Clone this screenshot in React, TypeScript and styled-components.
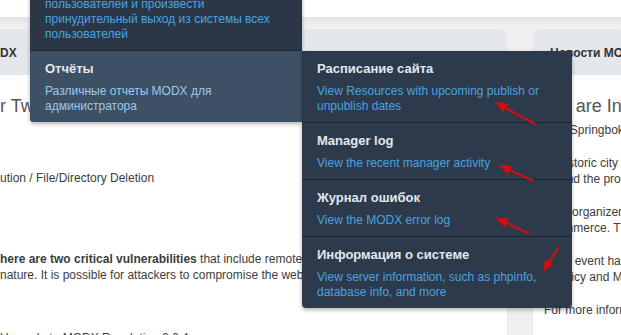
import React from "react";
import styled, { createGlobalStyle } from "styled-components";

const GlobalStyle = createGlobalStyle`
  html, body { margin: 0; padding: 0; }
  body {
    font-family: "Liberation Sans", Arial, sans-serif;
    background: #f0f0f0;
  }
`;

const Page = styled.div`
  position: relative;
  width: 621px;
  height: 335px;
  overflow: hidden;
  background: #f0f0f0;
`;

const TopBar = styled.header`
  height: 17px;
  background: #ffffff;
`;

const Dashboard = styled.main`
  display: flex;
  align-items: stretch;
  gap: 26px;
  height: 318px;
  box-sizing: border-box;
  padding-top: 13px;
  background: linear-gradient(to bottom, #e3e3e3 0, #eeeeee 7px, #f0f0f0 13px);
`;

const Widget = styled.section<{ $width: number; $cutLeft?: boolean }>`
  flex: 0 0 ${(p) => p.$width}px;
  display: flex;
  flex-direction: column;
  background: #ffffff;
  border-radius: ${(p) => (p.$cutLeft ? "0 5px 0 0" : "5px 5px 0 0")};
  box-shadow: 0 0 2px rgba(0, 0, 0, 0.1);
  overflow: hidden;
`;

const WidgetHeader = styled.h3<{ $pad: number }>`
  flex: 0 0 45px;
  display: flex;
  align-items: center;
  height: 45px;
  margin: 0;
  padding-left: ${(p) => p.$pad}px;
  background: #e4e8ec;
  color: #333333;
  font-size: 12px;
  font-weight: bold;
  white-space: nowrap;
`;

const WidgetBody = styled.div<{ $pad: number }>`
  flex: 0 0 auto;
  display: flex;
  flex-direction: column;
  padding: 20px 0 0 ${(p) => p.$pad}px;
`;

const Heading = styled.h2`
  flex: 0 0 auto;
  margin: 0 0 5px;
  font-size: 18px;
  line-height: 22px;
  font-weight: normal;
  color: #555555;
  white-space: nowrap;
`;

const Para = styled.p<{ $mt?: number }>`
  flex: 0 0 auto;
  margin: ${(p) => p.$mt ?? 0}px 0 17px;
  font-size: 12px;
  line-height: 16px;
  color: #3c3c3c;
  white-space: nowrap;
`;

const Menu = styled.nav`
  position: absolute;
  left: 30px;
  top: -51px;
  width: 272px;
  background: #2b3747;
  border-radius: 0 0 0 4px;
  box-shadow: 0 2px 4px rgba(0, 0, 0, 0.3);
`;

const MenuItem = styled.div<{ $active?: boolean; $last?: boolean }>`
  position: relative;
  padding: 9px 15px 8px;
  background: ${(p) => (p.$active ? "#3d5064" : "transparent")};
  border-bottom: ${(p) => (p.$last ? "none" : "1px solid #1d2733")};
  border-radius: ${(p) => (p.$last ? "0 0 0 4px" : "0")};
`;

const SubMenu = styled.div`
  position: absolute;
  left: 100%;
  top: 0;
  width: 270px;
  background: #2c3a4b;
  border-radius: 0 0 4px 4px;
  box-shadow: 0 2px 4px rgba(0, 0, 0, 0.3);
`;

const SubItem = styled.div<{ $last?: boolean }>`
  padding: 9px 15px 8px;
  border-bottom: ${(p) => (p.$last ? "none" : "1px solid #1d2733")};
`;

const ItemTitle = styled.div`
  margin-bottom: 6px;
  font-size: 13px;
  line-height: 18px;
  font-weight: bold;
  color: #e2e8ee;
`;

const ItemDesc = styled.div<{ $muted?: boolean }>`
  font-size: 12px;
  line-height: 15px;
  color: ${(p) => (p.$muted ? "#9fc9ee" : "#4aa3e0")};
`;

const Annotations = styled.svg`
  position: absolute;
  left: 0;
  top: 0;
  pointer-events: none;
`;

type Pt = [number, number];

function Arrow({ tail, tip }: { tail: Pt; tip: Pt }) {
  const dx = tip[0] - tail[0];
  const dy = tip[1] - tail[1];
  const len = Math.hypot(dx, dy);
  const ux = dx / len;
  const uy = dy / len;
  const hl = 12;
  const hw = 5;
  const bx = tip[0] - ux * hl;
  const by = tip[1] - uy * hl;
  const nx = -uy;
  const ny = ux;
  const pts = `${tip[0]},${tip[1]} ${bx + nx * hw},${by + ny * hw} ${bx - nx * hw},${by - ny * hw}`;
  return (
    <g>
      <line x1={tail[0]} y1={tail[1]} x2={bx} y2={by} stroke="#d10f0f" strokeWidth={2.2} strokeLinecap="round" />
      <polygon points={pts} fill="#d10f0f" />
    </g>
  );
}

const subItems = [
  { title: "Расписание сайта", desc: "View Resources with upcoming publish or unpublish dates" },
  { title: "Manager log", desc: "View the recent manager activity" },
  { title: "Журнал ошибок", desc: "View the MODX error log" },
  { title: "Информация о системе", desc: "View server information, such as phpinfo, database info, and more" },
];

export default function App() {
  return (
    <Page>
      <GlobalStyle />
      <TopBar />
      <Dashboard>
        <Widget $width={507} $cutLeft>
          <WidgetHeader $pad={0}>DX</WidgetHeader>
          <WidgetBody $pad={0}>
            <Heading>r Two Critical Vulnerabilities</Heading>
            <Para $mt={48}>ution / File/Directory Deletion</Para>
            <Para $mt={48}>
              <b>here are two critical vulnerabilities</b> that include remote code execution and
              <br />
              nature. It is possible for attackers to compromise the website.
            </Para>
            <Para $mt={30}>Upgrade to MODX Revolution 2.6.4</Para>
          </WidgetBody>
        </Widget>
        <Widget $width={300}>
          <WidgetHeader $pad={17}>Новости MODX</WidgetHeader>
          <WidgetBody $pad={11}>
            <Heading>We are Invited to Springbok</Heading>
            <Para>Visit Springbok this spring</Para>
            <Para>
              At historic city where the
              <br />
              behind the programme
            </Para>
            <Para>
              Both organizers of the event
              <br />
              ecommerce. The event
            </Para>
            <Para>
              Each event has its own
              <br />
              a Policy and MODX
            </Para>
            <Para>For more information</Para>
          </WidgetBody>
        </Widget>
      </Dashboard>

      <Menu>
        <MenuItem>
          <ItemTitle>Сессии</ItemTitle>
          <ItemDesc>
            Позволяет завершить сессии всех пользователей и произвести принудительный выход из системы всех
            пользователей
          </ItemDesc>
        </MenuItem>
        <MenuItem $active $last>
          <ItemTitle>Отчёты</ItemTitle>
          <ItemDesc $muted>Различные отчеты MODX для администратора</ItemDesc>
          <SubMenu>
            {subItems.map((it, i) => (
              <SubItem key={it.title} $last={i === subItems.length - 1}>
                <ItemTitle>{it.title}</ItemTitle>
                <ItemDesc>{it.desc}</ItemDesc>
              </SubItem>
            ))}
          </SubMenu>
        </MenuItem>
      </Menu>

      <Annotations width={621} height={335} viewBox="0 0 621 335">
        <Arrow tail={[535, 124]} tip={[495, 102]} />
        <Arrow tail={[533, 181]} tip={[499, 165]} />
        <Arrow tail={[528, 233]} tip={[496, 218]} />
        <Arrow tail={[558, 248]} tip={[543, 272]} />
      </Annotations>
    </Page>
  );
}
